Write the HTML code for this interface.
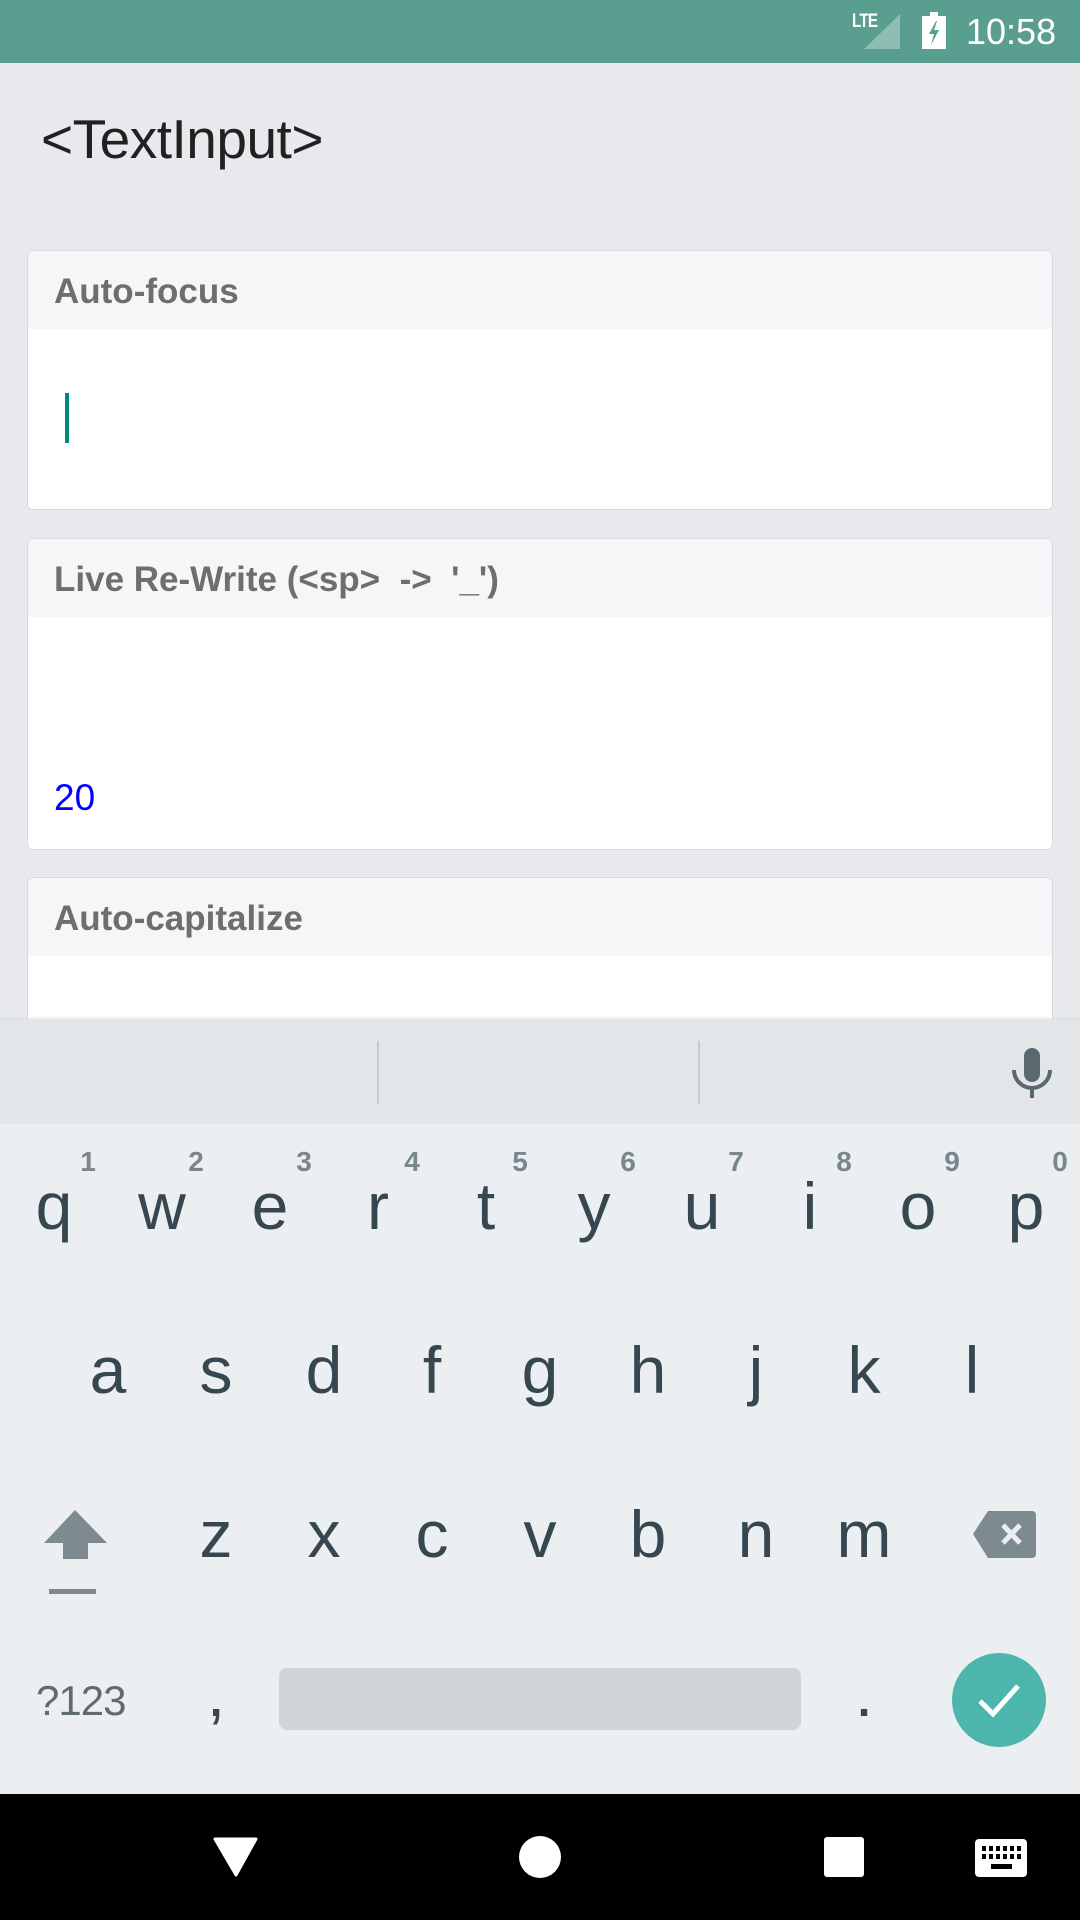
<!DOCTYPE html>
<html><head><meta charset="utf-8"><style>
*{margin:0;padding:0;box-sizing:border-box}
body{width:1080px;height:1920px;background:#E8E9ED;position:relative;overflow:hidden;font-family:"Liberation Sans",sans-serif}
.abs{position:absolute}
.card{position:absolute;left:27px;width:1026px;background:#fff;border:1.5px solid #D8DADE;border-radius:6px;overflow:hidden}
.hdr{background:#F5F6F8;height:78px;position:relative}
.lbl{position:absolute;left:26px;font-weight:bold;font-size:35px;color:#6E6E6E;letter-spacing:0}
.k{position:absolute;font-size:66px;color:#37474F;transform:translateX(-50%);line-height:1}
.n{position:absolute;font-size:28px;font-weight:bold;color:#7A868D;transform:translateX(-50%);line-height:1}
</style></head><body>
<div class="abs" style="left:0;top:0;width:1080px;height:63px;background:#5A9E8F"></div>
<div class="abs" style="left:852px;top:11px;font-size:19px;font-weight:bold;color:#fff;letter-spacing:-1px;transform:scaleX(0.8);transform-origin:left">LTE</div>
<svg class="abs" style="left:860px;top:10px" width="45" height="45"><polygon points="4,39 40,4 40,39" fill="#8FBDB4"/></svg>
<svg class="abs" style="left:920px;top:10px" width="30" height="42"><rect x="10" y="2" width="8" height="5" fill="#fff"/><rect x="2" y="6" width="24" height="33" fill="#fff"/><polygon points="16,11 9,24 14,24 11,35 19,20 14,20 17,11" fill="#5A9E8F"/></svg>
<div class="abs" style="left:966px;top:11px;font-size:36px;color:#fff">10:58</div>

<div class="abs" style="left:41px;top:107px;font-size:55px;color:#212121;letter-spacing:-0.5px">&lt;TextInput&gt;</div>

<div class="card" style="top:250px;height:260px"><div class="hdr"><div class="lbl" style="top:21px">Auto-focus</div></div>
<div class="abs" style="left:37px;top:142px;width:4px;height:50px;background:#00897B"></div></div>

<div class="card" style="top:538px;height:312px"><div class="hdr"><div class="lbl" style="top:21px">Live Re-Write (&lt;sp&gt;&nbsp; -&gt;&nbsp; '_')</div></div>
<div class="abs" style="left:26px;top:238px;font-size:37px;color:#0000FF">20</div></div>

<div class="card" style="top:877px;height:200px"><div class="hdr"><div class="lbl" style="top:21px">Auto-capitalize</div></div></div>

<div class="abs" style="left:0;top:1016px;width:1080px;height:6px;background:linear-gradient(#E8E9ED00,#D5D8DB)"></div>
<div class="abs" style="left:0;top:1020px;width:1080px;height:104px;background:#E3E6E9"></div>
<div class="abs" style="left:377px;top:1041px;width:2px;height:63px;background:#C6CBCF"></div>
<div class="abs" style="left:698px;top:1041px;width:2px;height:63px;background:#C6CBCF"></div>
<svg class="abs" style="left:1008px;top:1044px" width="48" height="58"><rect x="16" y="4" width="16" height="34" rx="8" fill="#5A6870"/><path d="M6 26 A18 18 0 0 0 42 26" stroke="#5A6870" stroke-width="4" fill="none"/><rect x="22" y="42" width="4" height="12" fill="#5A6870"/></svg>
<div class="abs" style="left:0;top:1124px;width:1080px;height:670px;background:#ECEFF1"></div>

<div class="k" style="left:54px;top:1173px">q</div><div class="n" style="left:88px;top:1148px">1</div>
<div class="k" style="left:162px;top:1173px">w</div><div class="n" style="left:196px;top:1148px">2</div>
<div class="k" style="left:270px;top:1173px">e</div><div class="n" style="left:304px;top:1148px">3</div>
<div class="k" style="left:378px;top:1173px">r</div><div class="n" style="left:412px;top:1148px">4</div>
<div class="k" style="left:486px;top:1173px">t</div><div class="n" style="left:520px;top:1148px">5</div>
<div class="k" style="left:594px;top:1173px">y</div><div class="n" style="left:628px;top:1148px">6</div>
<div class="k" style="left:702px;top:1173px">u</div><div class="n" style="left:736px;top:1148px">7</div>
<div class="k" style="left:810px;top:1173px">i</div><div class="n" style="left:844px;top:1148px">8</div>
<div class="k" style="left:918px;top:1173px">o</div><div class="n" style="left:952px;top:1148px">9</div>
<div class="k" style="left:1026px;top:1173px">p</div><div class="n" style="left:1060px;top:1148px">0</div>

<div class="k" style="left:108px;top:1337px">a</div>
<div class="k" style="left:216px;top:1337px">s</div>
<div class="k" style="left:324px;top:1337px">d</div>
<div class="k" style="left:432px;top:1337px">f</div>
<div class="k" style="left:540px;top:1337px">g</div>
<div class="k" style="left:648px;top:1337px">h</div>
<div class="k" style="left:756px;top:1337px">j</div>
<div class="k" style="left:864px;top:1337px">k</div>
<div class="k" style="left:972px;top:1337px">l</div>

<svg class="abs" style="left:40px;top:1505px" width="72" height="95"><polygon points="35,5 67,38 48,38 48,54 23,54 23,38 4,38" fill="#7D8A90"/><rect x="9" y="84" width="47" height="5" fill="#7D8A90"/></svg>
<div class="k" style="left:216px;top:1501px">z</div>
<div class="k" style="left:324px;top:1501px">x</div>
<div class="k" style="left:432px;top:1501px">c</div>
<div class="k" style="left:540px;top:1501px">v</div>
<div class="k" style="left:648px;top:1501px">b</div>
<div class="k" style="left:756px;top:1501px">n</div>
<div class="k" style="left:864px;top:1501px">m</div>
<svg class="abs" style="left:970px;top:1508px" width="70" height="54"><path d="M18 3 H62 a4 4 0 0 1 4 4 V46 a4 4 0 0 1 -4 4 H18 L3 26 Z" fill="#7D8A90"/><path d="M33 17 L50 35 M50 17 L33 35" stroke="#ECEFF1" stroke-width="5"/></svg>

<div class="abs" style="left:36px;top:1677px;font-size:42px;color:#5F6B73;letter-spacing:-1px">?123</div>
<div class="k" style="left:216px;top:1660px">,</div>
<div class="abs" style="left:279px;top:1668px;width:522px;height:62px;background:#D1D5D8;border-radius:8px"></div>
<div class="k" style="left:864px;top:1660px">.</div>
<div class="abs" style="left:952px;top:1653px;width:94px;height:94px;border-radius:50%;background:#4DB6AC"></div>
<svg class="abs" style="left:972px;top:1673px" width="54" height="54"><path d="M8 28 L21 41 L46 13" stroke="#fff" stroke-width="5" fill="none"/></svg>

<div class="abs" style="left:0;top:1794px;width:1080px;height:126px;background:#000"></div>
<svg class="abs" style="left:212px;top:1836px" width="48" height="42"><path d="M3 3 H44 L24 39 Z" fill="#fff" stroke="#fff" stroke-width="3" stroke-linejoin="round"/></svg>
<div class="abs" style="left:519px;top:1836px;width:42px;height:42px;border-radius:50%;background:#fff"></div>
<div class="abs" style="left:824px;top:1837px;width:40px;height:40px;border-radius:3px;background:#fff"></div>
<svg class="abs" style="left:975px;top:1839px" width="52" height="38"><rect width="52" height="38" rx="4" fill="#fff"/><g fill="#000"><rect x="7" y="7" width="4" height="5"/><rect x="14" y="7" width="4" height="5"/><rect x="21" y="7" width="4" height="5"/><rect x="28" y="7" width="4" height="5"/><rect x="35" y="7" width="4" height="5"/><rect x="42" y="7" width="4" height="5"/><rect x="7" y="15" width="4" height="5"/><rect x="14" y="15" width="4" height="5"/><rect x="21" y="15" width="4" height="5"/><rect x="28" y="15" width="4" height="5"/><rect x="35" y="15" width="4" height="5"/><rect x="42" y="15" width="4" height="5"/><rect x="16" y="25" width="21" height="5"/></g></svg>
</body></html>
